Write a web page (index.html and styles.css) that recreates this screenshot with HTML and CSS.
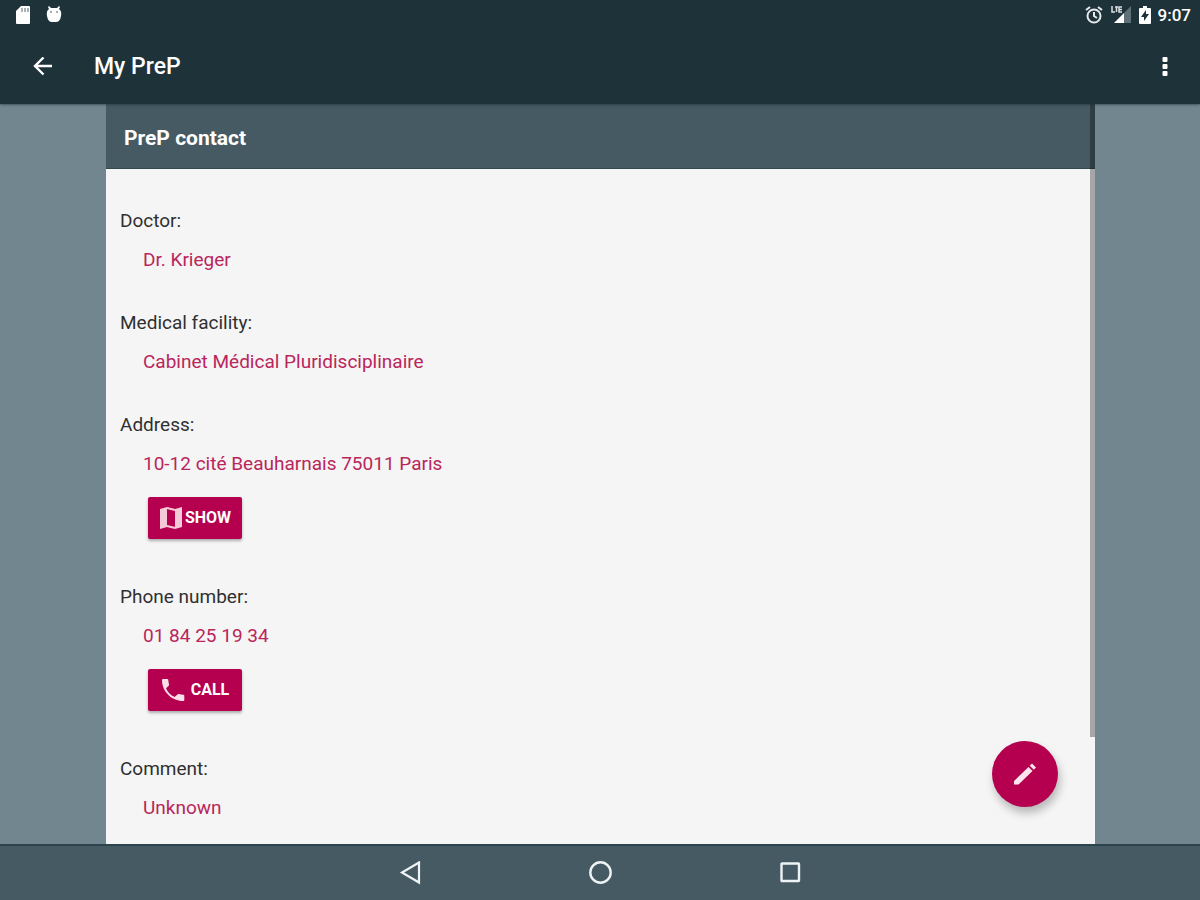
FILE: index.html
```html
<!DOCTYPE html>
<html lang="en">
<head>
<meta charset="utf-8">
<meta name="viewport" content="width=device-width, initial-scale=1">
<title>My PreP</title>
<link rel="stylesheet" href="styles.css">
</head>
<body>
<header class="top">
  <div class="status">
    <div class="status-left">
      <svg width="16" height="20" viewBox="0 0 16 20" aria-hidden="true"><path fill="#fff" d="M6 1h8q1 0 1 1v16q0 1-1 1H2q-1 0-1-1V6z"/><path stroke="#8d999e" stroke-width="1.5" d="M7 3v4M10 3v4M13 3v4"/></svg>
      <svg width="16" height="20" viewBox="0 0 16 20" aria-hidden="true"><path fill="#fff" d="M3 1l2 2h6l2-2 1 1-1 2q3 2 2 7-1 6-5 6H6q-4 0-5-6-1-5 2-7L2 2z"/><path fill="#a5aeb2" d="M4 6h2v2H4zM10 6h2v2h-2z"/></svg>
    </div>
    <div class="status-right">
      <svg width="18" height="20" viewBox="0 0 18 20" fill="none" stroke="#e6eaec" stroke-width="2" aria-hidden="true"><circle cx="9" cy="11" r="6.5"/><path d="M1 5l4-3M17 5l-4-3M9 7v4l3 2"/></svg>
      <svg width="22" height="20" viewBox="0 0 22 20" aria-hidden="true"><path fill="#5f7077" d="M14 8l7-7v17h-7z"/><path fill="#fff" d="M4 18L14 8v10z"/><path fill="none" stroke="#dce1e3" stroke-width="1.5" d="M2 1v6h3M5 2h3M6.500 2v5M12 2H9v5h3M9 4.500h3"/></svg>
      <svg width="12" height="20" viewBox="0 0 12 20" aria-hidden="true"><path fill="#fff" d="M4 1h4v2h3q1 0 1 1v14q0 1-1 1H1q-1 0-1-1V4q0-1 1-1h3z"/><path fill="#1e323a" d="M7 5l-5 7h3v4l5-7H7z"/></svg>
      <span class="clock">9:07</span>
    </div>
  </div>
  <div class="appbar">
    <button class="icon-button" type="button" aria-label="Back"><svg width="20" height="20" viewBox="0 0 20 20" fill="none" stroke="#fff" stroke-width="2.400"><path d="M19 9H2M10.500 0.500L2 9l8.500 8.500"/></svg></button>
    <h1 class="title">My PreP</h1>
    <button class="icon-button" type="button" aria-label="More options"><svg width="6" height="20" viewBox="0 0 6 20" fill="#fff"><rect x="0.500" y="0" width="5" height="5" rx="1"/><rect x="0.500" y="7" width="5" height="5" rx="1"/><rect x="0.500" y="14" width="5" height="5" rx="1"/></svg></button>
  </div>
</header>
<main class="page">
  <section class="card">
    <h2 class="card-title">PreP contact</h2>
    <dl class="details">
      <div class="item"><dt>Doctor:</dt><dd>Dr. Krieger</dd></div>
      <div class="item"><dt>Medical facility:</dt><dd>Cabinet Médical Pluridisciplinaire</dd></div>
      <div class="item"><dt>Address:</dt><dd>10-12 cité Beauharnais 75011 Paris</dd>
        <dd class="action"><button class="action-button" type="button"><svg width="24" height="24" viewBox="0 0 24 24"><path fill="#f6c9d9" d="M1 3l7-2v20l-7 2zM16 3l7-2v20l-7 2z"/><path fill="none" stroke="#f6c9d9" stroke-width="2" d="M8 2l8 2M8 20l8 2"/></svg>SHOW</button></dd>
      </div>
      <div class="item"><dt>Phone number:</dt><dd>01 84 25 19 34</dd>
        <dd class="action"><button class="action-button call" type="button"><svg width="24" height="24" viewBox="0 0 24 24"><path fill="#fbdfe9" d="M5 10.200c1.700 3.900 4.700 7 8.600 8.800l2.900-2.600q.6-.6 1.400-.3 2.200.6 4.400.6 1 0 1 1V22q0 1-1 1C10.500 23 1 13.500 1 2q0-1 1-1h4.300q1 0 1 1 .1 2.300.7 4.300.2.800-.3 1.400z"/></svg>CALL</button></dd>
      </div>
      <div class="item"><dt>Comment:</dt><dd>Unknown</dd></div>
    </dl>
    <div class="scroll-thumb"></div>
    <button class="fab" type="button" aria-label="Edit"><svg width="24" height="24" viewBox="0 0 24 24" fill="#fde4ed"><path d="M1 19L15.500 5l4 4L5.500 22.500H1zM16.800 3.800L19 1.500l4 4-2.200 2.300z"/></svg></button>
  </section>
</main>
<nav class="navbar">
  <button class="nav-button" type="button" aria-label="Back"><svg width="24" height="24" viewBox="0 0 24 24" fill="none" stroke="#eef3f5" stroke-width="2.200"><path d="M21 1.500v20L4 11.500z"/></svg></button>
  <button class="nav-button" type="button" aria-label="Home"><svg width="24" height="24" viewBox="0 0 24 24" fill="none" stroke="#eef3f5" stroke-width="2.400"><circle cx="12.500" cy="11.500" r="10.200"/></svg></button>
  <button class="nav-button" type="button" aria-label="Recent apps"><svg width="24" height="24" viewBox="0 0 24 24" fill="none" stroke="#eef3f5" stroke-width="2.400"><rect x="3.500" y="2.500" width="17.500" height="17.500" rx="0.500"/></svg></button>
</nav>
</body>
</html>
```

FILE: styles.css
```css
* {
  box-sizing: border-box;
}

body {
  margin: 0;
  min-height: 100vh;
  display: flex;
  flex-direction: column;
  background: #71868f;
  color: #303030;
  font-family: Roboto, "Liberation Sans", sans-serif;
  font-size: 19px;
  line-height: 24px;
}

button {
  border: 0;
  padding: 0;
  background: none;
  color: inherit;
  font: inherit;
  display: flex;
  align-items: center;
  justify-content: center;
}

.top {
  background: #1e323a;
  color: #fff;
  box-shadow: 0 1px 2px rgba(20, 40, 48, 0.5);
  position: relative;
  z-index: 1;
}

.status {
  height: 30px;
  padding: 0 9px 0 15px;
  display: flex;
  align-items: center;
  justify-content: space-between;
}

.status-left {
  display: flex;
  gap: 15px;
}

.status-right {
  display: flex;
  align-items: center;
  gap: 7px;
}

.clock {
  font-size: 17px;
  font-weight: 500;
}

.appbar {
  height: 74px;
  padding: 0 12px 0 20px;
  display: flex;
  align-items: center;
}

.icon-button {
  min-width: 46px;
  height: 46px;
}

.title {
  flex: 1;
  margin: 0 0 0 28px;
  font-size: 23px;
  font-weight: 500;
}

.page {
  flex: 1;
  display: flex;
  padding: 0 105px 0 106px;
}

.card {
  flex: 1;
  position: relative;
  background: #f5f5f5;
}

.card-title {
  margin: 0;
  padding: 22px 18px 18px;
  background: #465a63;
  border-bottom: 1px solid #34484f;
  color: #fff;
  font-size: 21px;
  font-weight: 700;
}

.details {
  margin: 0;
  padding: 40px 14px 22px;
  display: flex;
  flex-direction: column;
  gap: 39px;
}

.item dd {
  margin: 15px 0 0 23px;
  color: #b9265b;
}

.item .action {
  margin: 21px 0 7px 28px;
}

.action-button {
  width: 94px;
  height: 42px;
  gap: 2px;
  border-radius: 2px;
  background: #b4004e;
  box-shadow: 0 2px 3px rgba(0, 0, 0, 0.3);
  color: #fff;
  font-size: 16px;
  font-weight: 700;
}

.call {
  gap: 6px;
}

.scroll-thumb {
  position: absolute;
  top: 0;
  right: 0;
  width: 5px;
  height: 633px;
  background: rgba(0, 0, 0, 0.32);
}

.fab {
  position: absolute;
  right: 37px;
  bottom: 37px;
  width: 66px;
  height: 66px;
  border-radius: 50%;
  background: #b4004e;
  box-shadow: 2px 6px 9px rgba(0, 0, 0, 0.25);
}

.navbar {
  height: 56px;
  border-top: 2px solid #2b444d;
  background: #465a63;
  display: flex;
  align-items: center;
  justify-content: center;
  gap: 142px;
}

.nav-button {
  width: 48px;
  height: 48px;
}
```
